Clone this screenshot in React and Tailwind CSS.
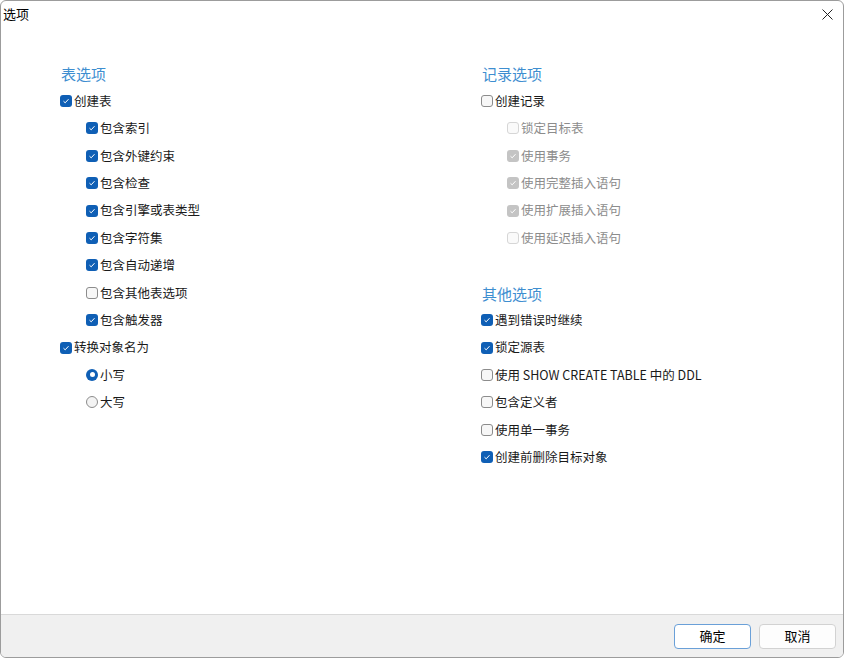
import React from 'react';

const font = { fontFamily: '"Noto Sans CJK SC", "Noto Sans", sans-serif' };

const Check = ({ checked, disabled }) => {
    if (checked) {
        return (
            <span className={`w-[12px] h-[12px] rounded-[3px] flex items-center justify-center shrink-0 ${disabled ? 'bg-[#c4c4c4]' : 'bg-[#0f5fb5]'}`}>
                <svg width="8" height="8" viewBox="0 0 8 8">
                    <path d="M1.5 4.2 L3.2 5.8 L6.5 2.2" stroke="white" strokeWidth="1" fill="none" />
                </svg>
            </span>
        );
    }
    return (
        <span className={`w-[12px] h-[12px] rounded-[3px] border shrink-0 ${disabled ? 'border-[#d6d6d6] bg-[#fafafa]' : 'border-[#8c8c8c] bg-[#f7f7f7]'}`}></span>
    );
};

const Radio = ({ checked }) => (
    checked ? (
        <span className="w-[12px] h-[12px] rounded-full bg-[#0f5fb5] flex items-center justify-center shrink-0">
            <span className="w-[5px] h-[5px] rounded-full bg-white"></span>
        </span>
    ) : (
        <span className="w-[12px] h-[12px] rounded-full border border-[#8c8c8c] bg-[#f3f3f3] shrink-0"></span>
    )
);

const Row = ({ label, checked, disabled, indent, radio }) => (
    <div className={`h-[27.4px] flex items-center gap-[2px] ${indent ? 'pl-[26px]' : ''}`}>
        {radio ? <Radio checked={checked} /> : <Check checked={checked} disabled={disabled} />}
        <span className={`text-[12.5px] leading-none ${disabled ? 'text-[#8c8c8c]' : 'text-[#1a1a1a]'}`}>{label}</span>
    </div>
);

const Header = ({ children }) => (
    <div className="h-[27.4px] flex items-center pt-[2px] pl-px text-[15px] text-[#3e8ed0]">{children}</div>
);

export default function App() {
    return (
        <div style={font} className="w-[844px] h-[658px] bg-white border border-[#9c9c9c] rounded-[6px] overflow-hidden flex flex-col">
            {/* Title bar */}
            <div className="h-[26px] flex items-center justify-between pl-[2px] pr-[10px]">
                <span className="text-[13px] text-black">选项</span>
                <svg width="11" height="11" viewBox="0 0 11 11">
                    <path d="M0.5 0.5 L10.5 10.5 M10.5 0.5 L0.5 10.5" stroke="#222" strokeWidth="1" />
                </svg>
            </div>

            {/* Content */}
            <div className="flex-1 flex pt-[33px]">
                <div className="w-[480px] pl-[59px]">
                    <Header>表选项</Header>
                    <Row label="创建表" checked />
                    <Row label="包含索引" checked indent />
                    <Row label="包含外键约束" checked indent />
                    <Row label="包含检查" checked indent />
                    <Row label="包含引擎或表类型" checked indent />
                    <Row label="包含字符集" checked indent />
                    <Row label="包含自动递增" checked indent />
                    <Row label="包含其他表选项" indent />
                    <Row label="包含触发器" checked indent />
                    <Row label="转换对象名为" checked />
                    <Row label="小写" checked radio indent />
                    <Row label="大写" radio indent />
                </div>
                <div className="flex-1">
                    <Header>记录选项</Header>
                    <Row label="创建记录" />
                    <Row label="锁定目标表" disabled indent />
                    <Row label="使用事务" checked disabled indent />
                    <Row label="使用完整插入语句" checked disabled indent />
                    <Row label="使用扩展插入语句" checked disabled indent />
                    <Row label="使用延迟插入语句" disabled indent />
                    <div className="h-[27.4px]"></div>
                    <Header>其他选项</Header>
                    <Row label="遇到错误时继续" checked />
                    <Row label="锁定源表" checked />
                    <Row label="使用 SHOW CREATE TABLE 中的 DDL" />
                    <Row label="包含定义者" />
                    <Row label="使用单一事务" />
                    <Row label="创建前删除目标对象" checked />
                </div>
            </div>

            {/* Footer */}
            <div className="h-[43px] bg-[#f0f0f0] border-t border-[#d9d9d9] flex items-center justify-end gap-[8px] pr-[7px]">
                <button className="w-[77px] h-[25px] rounded-[4px] bg-white border border-[#6aa0d8] text-[13px] text-black">确定</button>
                <button className="w-[77px] h-[25px] rounded-[4px] bg-[#fdfdfd] border border-[#d2d2d2] text-[13px] text-black">取消</button>
            </div>
        </div>
    );
}
